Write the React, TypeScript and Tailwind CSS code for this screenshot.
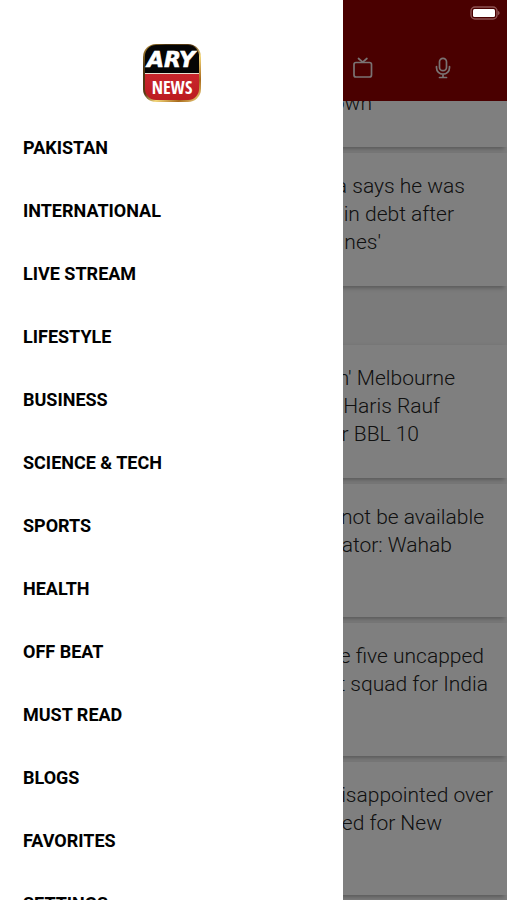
const menuItems = [
  "PAKISTAN",
  "INTERNATIONAL",
  "LIVE STREAM",
  "LIFESTYLE",
  "BUSINESS",
  "SCIENCE & TECH",
  "SPORTS",
  "HEALTH",
  "OFF BEAT",
  "MUST READ",
  "BLOGS",
  "FAVORITES",
  "SETTINGS",
];

type Line = { text: string; inset: string };

const topStories: Line[][] = [
  [
    { text: "a says he was", inset: "pr-[42px]" },
    { text: "in debt after", inset: "pr-[53px]" },
    { text: "nes'", inset: "pr-[126px]" },
  ],
];

const sportStories: Line[][] = [
  [
    { text: "n' Melbourne", inset: "pr-[52px]" },
    { text: "Haris Rauf", inset: "pr-[67px]" },
    { text: "r BBL 10", inset: "pr-[88px]" },
  ],
  [
    { text: "not be available", inset: "pr-[23px]" },
    { text: "ator: Wahab", inset: "pr-[55px]" },
  ],
  [
    { text: "e five uncapped", inset: "pr-[23px]" },
    { text: "t squad for India", inset: "pr-[19px]" },
  ],
  [
    { text: "isappointed over", inset: "pr-[14px]" },
    { text: "ed for New", inset: "pr-[65px]" },
  ],
];

function Logo() {
  return (
    <svg width="60" height="60" viewBox="0 0 60 60" role="img" aria-label="ARY News">
      <defs>
        <linearGradient id="gold" x1="0" y1="0" x2="1" y2="1">
          <stop offset="0" stopColor="#c79a3a" />
          <stop offset="0.2" stopColor="#4a3310" />
          <stop offset="0.45" stopColor="#5a3c14" />
          <stop offset="0.6" stopColor="#f3d77c" />
          <stop offset="0.8" stopColor="#a86a1c" />
          <stop offset="1" stopColor="#f6dc8a" />
        </linearGradient>
        <linearGradient id="red" x1="0" y1="0" x2="0" y2="1">
          <stop offset="0" stopColor="#c9262c" />
          <stop offset="1" stopColor="#bb1a20" />
        </linearGradient>
        <clipPath id="badge">
          <rect x="3" y="2" width="54" height="55" rx="11" />
        </clipPath>
      </defs>
      <rect x="1" y="1" width="58" height="58" rx="13" fill="url(#gold)" />
      <g clipPath="url(#badge)">
        <rect x="2" y="1" width="56" height="29" fill="#050505" />
        <rect x="2" y="30" width="56" height="1" fill="#e9dfd0" />
        <rect x="2" y="31" width="56" height="27" fill="url(#red)" />
      </g>
      <text
        x="29"
        y="24"
        textAnchor="middle"
        fill="#fff"
        stroke="#fff"
        strokeWidth="0.6"
        className="font-['DejaVu_Sans',sans-serif] text-[22px] font-bold italic"
      >
        ARY
      </text>
      <text
        x="30"
        y="51"
        textAnchor="middle"
        fill="#fff"
        className="font-['Liberation_Sans_Narrow','Open_Sans_Condensed',sans-serif] text-[18px] font-bold"
      >
        NEWS
      </text>
    </svg>
  );
}

function Battery() {
  return (
    <svg width="30" height="14" viewBox="0 0 30 14" fill="none" aria-hidden="true">
      <rect x="1" y="1" width="26" height="12" rx="4" stroke="#8f5252" strokeWidth="1.4" />
      <rect x="3" y="3" width="22" height="8" rx="1.5" fill="#fff" />
      <path d="M28 5v4c1-.4 1.600-1.100 1.600-2s-.6-1.600-1.600-2z" fill="#8f5252" />
    </svg>
  );
}

function TvIcon() {
  return (
    <svg width="22" height="22" viewBox="0 0 22 22" fill="none" stroke="#fff" strokeWidth="1.7" strokeLinecap="round" strokeLinejoin="round">
      <rect x="2" y="5.500" width="17.500" height="14.500" rx="2" />
      <path d="M6.500 1.500 10.700 5.200l4.200-3.700" />
    </svg>
  );
}

function MicIcon() {
  return (
    <svg width="22" height="22" viewBox="0 0 22 22" fill="none" stroke="#fff" strokeWidth="1.700" strokeLinecap="round" strokeLinejoin="round">
      <rect x="7.500" y="1.300" width="7" height="12.400" rx="3.500" />
      <path d="M4.500 9.500v1.200a6.500 6.500 0 0 0 13 0V9.500M11 17.200v3.300M7.500 20.500h7" />
    </svg>
  );
}

function StoryCard({ lines }: { lines: Line[] }) {
  return (
    <article className="min-h-[133px] bg-white pt-[19px] shadow-[-3px_2px_4px_rgba(0,0,0,0.28)]">
      <h2 className="text-[21px] leading-[28px] font-light text-[#222222]">
        {lines.map((line) => (
          <span key={line.text} className={`flex justify-end whitespace-nowrap ${line.inset}`}>
            {line.text}
          </span>
        ))}
      </h2>
    </article>
  );
}

export default function App() {
  return (
    <div className="flex h-screen overflow-hidden bg-white font-[Roboto,sans-serif]">
      <aside className="flex min-w-0 flex-[343] flex-col overflow-y-auto bg-white pt-[43px] [scrollbar-width:none]">
        <div className="flex shrink-0 justify-center">
          <Logo />
        </div>
        <nav className="mt-[13px] flex flex-col">
          {menuItems.map((item) => (
            <a
              key={item}
              href="#"
              className="flex h-[63px] shrink-0 items-center px-[23px] text-[18px] font-bold text-black"
            >
              {item}
            </a>
          ))}
        </nav>
      </aside>

      <main className="relative flex min-w-0 flex-[164] flex-col overflow-hidden bg-[#f6f6f6]">
        <header className="z-10 flex h-[101px] shrink-0 flex-col bg-[#940000]">
          <div className="h-[57px] shrink-0" />
          <div className="flex gap-[58px] pl-[9px]">
            <button type="button" aria-label="Live TV" className="opacity-90">
              <TvIcon />
            </button>
            <button type="button" aria-label="Voice search" className="opacity-90">
              <MicIcon />
            </button>
          </div>
        </header>

        <section className="flex flex-col gap-[6px]">
          <article className="h-[46px] bg-white shadow-[-3px_2px_4px_rgba(0,0,0,0.28)]">
            <h2 className="-mt-3 flex justify-end pr-[135px] text-[21px] leading-[28px] font-light whitespace-nowrap text-[#222222]">
              own
            </h2>
          </article>
          {topStories.map((lines) => (
            <StoryCard key={lines[0].text} lines={lines} />
          ))}
        </section>

        <section className="mt-[59px] flex flex-col gap-[6px]">
          {sportStories.map((lines) => (
            <StoryCard key={lines[0].text} lines={lines} />
          ))}
        </section>

        {/* Scrim over the page while the drawer is open, status icons stay bright */}
        <div className="absolute inset-0 z-20 bg-black/50" />
        <div className="absolute top-[6px] right-[7px] z-30">
          <Battery />
        </div>
      </main>
    </div>
  );
}
